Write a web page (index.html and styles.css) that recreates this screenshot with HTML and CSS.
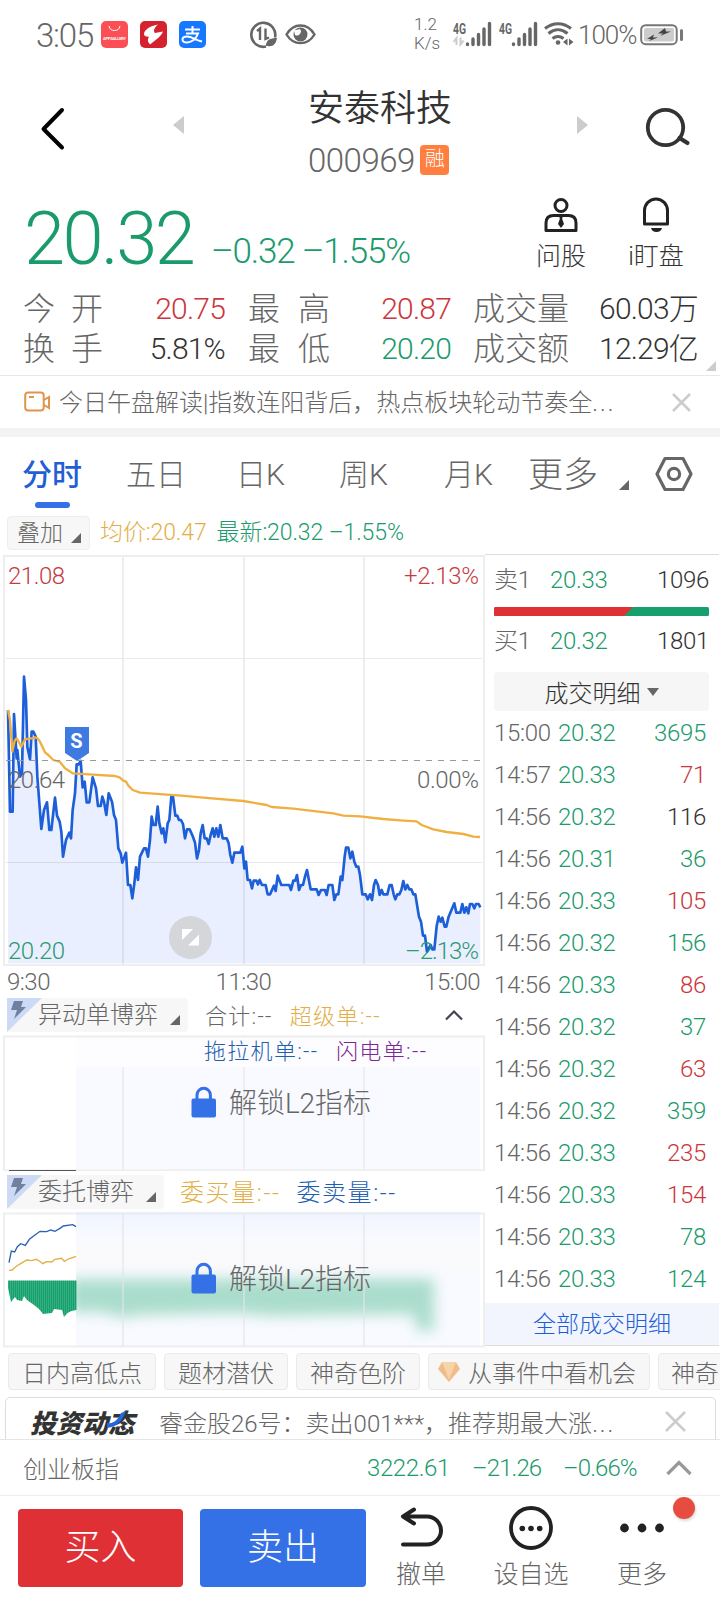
FILE: index.html
```html
<!DOCTYPE html>
<html lang="zh-CN">
<head>
  <meta charset="UTF-8" />
  <title>安泰科技 000969</title>
  <link rel="stylesheet" href="styles.css">
</head>
<body>

  <div class="status">
    <span class="clock">3:05</span>
    <svg class="apps" width="106" height="28" viewBox="0 0 106 28">
      <rect x="0" y="0" width="27" height="27" rx="5" fill="#fb4f55"/>
      <path d="M8 5a5.600 5.600 0 0 0 11 0" fill="none" stroke="#fff" stroke-width="1"/>
      <text x="2" y="18.500" font-size="4" font-weight="700" fill="#fff" textLength="23">APPGALLERY</text>
      <rect x="39" y="0" width="27" height="27" rx="5" fill="#d4232f"/>
      <path d="M57 3.500C49 5 43 9 43 13c0 2.500 3 2.500 5 3-2 3-1 5 1 7.500l5-4c4-3 7-6 8-9l-8 1.500c-2-2-1-5 3-8.500z" fill="#fff"/>
      <rect x="78" y="0" width="27" height="27" rx="5" fill="#1677ff"/>
      <path d="M84 8.500h15M91.500 5v7M85 12.500h12c-2 6-7 9-11 9-6 0-6-6 0-6 5 0 9 4 15 5" fill="none" stroke="#fff" stroke-width="2"/>
    </svg>
    <svg class="modes" width="66" height="28" viewBox="0 0 66 28">
      <path d="M25 16.500a12 12 0 1 0-9 9" fill="none" stroke="#666" stroke-width="2.600"/>
      <path d="M7 10l3-2.500V19M19 16.500L15.500 18V7.500" fill="none" stroke="#666" stroke-width="2.400"/>
      <path d="M16 25c0-6 4-8 11-8-1 6-4 9-9 8z" fill="#666"/>
      <path d="M36.500 13.500c7-12 21-12 28 0-7 11.500-21 11.500-28 0z" fill="none" stroke="#666" stroke-width="2.400"/>
      <circle cx="50.500" cy="13.500" r="7" fill="#666"/>
      <path d="M44 9.500l6-1.500a4 4 0 0 1-5 6z" fill="#fff"/>
    </svg>
    <span class="speed">1.2<br>K/s</span>
    <svg class="signal" width="122" height="28" viewBox="0 0 122 28">
      <g font-size="14" font-weight="700" fill="#666">
        <text x="1" y="12.500" textLength="13" lengthAdjust="spacingAndGlyphs">4G</text>
        <text x="47" y="12.500" textLength="13" lengthAdjust="spacingAndGlyphs">4G</text>
      </g>
      <path d="M1.500 21l3-4v7M8.500 16.500v7l3-4" fill="none" stroke="#ccc" stroke-width="2"/>
      <g stroke="#666" stroke-width="3.400" stroke-linecap="round">
        <path d="M15.500 23v.5M21 18v5.500M26.500 13.500v10M32 8v15.500M37.500 2.500v21"/>
        <path d="M61.500 23v.5M67 18v5.500M72.500 13.500v10M78 8v15.500M83.500 2.500v21"/>
      </g>
      <g fill="none" stroke="#666" stroke-width="3">
        <path d="M93 7.500c8-6.500 18-6.500 26 0M96.500 12.500c6-5 13-5 19 0M100.500 17.500c4-3 7-3 11 0"/>
      </g>
      <circle cx="106" cy="21.500" r="2.300" fill="#666"/>
      <path d="M115.500 17.500v7l-4.500-3.500zM117 17.500v7l4.500-3.500z" fill="#666"/>
    </svg>
    <span class="percent">100%</span>
    <svg class="battery" width="44" height="22" viewBox="0 0 44 22">
      <rect x="1.200" y="1.200" width="35.500" height="19" rx="4.500" fill="none" stroke="#777" stroke-width="2"/>
      <rect x="4" y="4" width="30" height="13.500" rx="2" fill="#ccc"/>
      <path d="M25 4l-7 5.500h5l-3 2.500 11-4.500h-5zM14 10.500l-7 4.500h4l-2 2 9-3.500h-5z" fill="#444"/>
      <path d="M41.500 6.500v9" stroke="#777" stroke-width="3" stroke-linecap="round"/>
    </svg>
  </div>

  <div class="header">
    <svg class="back" width="26" height="44" viewBox="0 0 26 44"><path d="M23 3L4.500 22 23 40.500" fill="none" stroke="#000" stroke-width="4" stroke-linecap="round" stroke-linejoin="round"/></svg>
    <span class="arrow-left"></span>
    <div class="title">
      <h1>安泰科技</h1>
      <div class="code"><span>000969</span><i class="badge">融</i></div>
    </div>
    <span class="arrow-right"></span>
    <svg class="search" width="46" height="44" viewBox="0 0 46 44"><circle cx="20.500" cy="21.500" r="17.700" fill="none" stroke="#333" stroke-width="3.800"/><path d="M34.500 32l8 5" stroke="#333" stroke-width="4.200" stroke-linecap="round"/></svg>
  </div>

  <div class="quote">
    <span class="price down">20.32</span>
    <span class="change down">–0.32 –1.55%</span>
    <div class="tool ask">
      <svg width="34" height="36" viewBox="0 0 34 36"><g fill="none" stroke="#222" stroke-width="3"><circle cx="17" cy="8.500" r="6"/><path d="M2 33.500V26q0-7.500 7.500-7.500h15q7.500 0 7.500 7.500v7.500z" stroke-linejoin="round"/></g><path d="M15 18h4l-.8 4 1.800 5-3 4-3-4 1.800-5z" fill="#222"/></svg>
      <span>问股</span>
    </div>
    <div class="tool watch">
      <svg width="34" height="36" viewBox="0 0 34 36"><path d="M5.500 27V13.500a11.500 11.500 0 0 1 23 0V27z" fill="none" stroke="#222" stroke-width="3" stroke-linejoin="round"/><path d="M12 31h11q-1 4-5.500 4T12 31z" fill="#222"/></svg>
      <span>i盯盘</span>
    </div>
  </div>

  <div class="facts">
    <span class="key wide"><b>今</b><b>开</b></span><span class="value up">20.75</span>
    <span class="key wide"><b>最</b><b>高</b></span><span class="value up">20.87</span>
    <span class="key">成交量</span><span class="value">60.03万</span>
    <span class="key wide"><b>换</b><b>手</b></span><span class="value">5.81%</span>
    <span class="key wide"><b>最</b><b>低</b></span><span class="value down">20.20</span>
    <span class="key">成交额</span><span class="value">12.29亿</span>
    <i class="corner"></i>
  </div>

  <div class="news">
    <svg width="27" height="22" viewBox="0 0 27 22"><g fill="none" stroke="#e0944e" stroke-width="2"><rect x="1.200" y="1.500" width="18.500" height="18" rx="3"/><path d="M20 9l5-3v11l-5-3M5 6h5"/></g></svg>
    <span class="text">今日午盘解读|指数连阳背后，热点板块轮动节奏全<b>...</b></span>
    <svg class="close" width="21" height="21" viewBox="0 0 21 21"><path d="M2 2l17 17M19 2L2 19" stroke="#ccc" stroke-width="2.500"/></svg>
  </div>

  <div class="tabs">
    <span class="tab active">分时</span>
    <span class="tab">五日</span>
    <span class="tab">日K</span>
    <span class="tab">周K</span>
    <span class="tab">月K</span>
    <span class="tab more">更多</span>
    <i class="tri"></i>
    <svg width="38" height="36" viewBox="0 0 38 36"><g fill="none" stroke="#666" stroke-width="3.200" stroke-linejoin="round"><path d="M10 2.500h18L36 18l-8 15.500H10L2 18z"/><circle cx="19" cy="18" r="5.600"/></g></svg>
  </div>

  <div class="main">
    <div class="charts">
      <div class="legend">
        <span class="label">叠加<i class="tri"></i></span>
        <span class="avg">均价:20.47</span>
        <span class="down">最新:20.32 –1.55%</span>
      </div>

      <!-- intraday price -->
      <svg class="chart" width="486" height="411" viewBox="0 555 486 411">
        <g fill="none" stroke="#eee" stroke-width="2">
          <path d="M4 556h480v409H4z"/>
          <path d="M123 556v409M244 556v409M364 556v409" />
          <path d="M6 658.500h476M6 862.500h476" stroke="#e8e8e8" stroke-width="1"/>
        </g>
        <g transform="translate(0 650) scale(.33333)" fill="none" stroke-linejoin="round">
          <path d="M24 940V180L30 485H38L42 192L50 325L52 300L60 380L66 370L72 80L78 150L82 290L90 328L95 245H100L107 260L112 380L124 537L132 480L141 457L148 540H154L165 443L171 497L179 515L184 545L189 620L198 570L208 548L213 565L218 480L225 430L230 343H236L242 333L248 412L254 395L260 457H268L278 382L288 415L294 468H302L307 440L312 455L319 495L326 430L336 455L342 495L348 510L355 595L362 610L367 638L378 608L384 705H391L397 745L403 700L408 652L414 690L420 620L432 595H438L444 620L450 570L455 500L460 525H467L473 470L478 520L485 550L490 535L496 577L503 520L508 510L514 440H519L526 497H532L537 510H543L549 522L555 565L561 538H569L578 558L585 578L591 625L597 600L602 550L608 525L614 565H620L626 582L632 555L638 535L643 560L649 535L655 560L661 525L668 565H680L686 580L691 615L697 638L703 608H721L727 590L733 655L738 635L743 690H750L756 715L761 692H769L774 703L779 690L786 705H797L803 733H810L822 707L827 723L833 677L844 705H868L873 720L880 692H886L891 675L897 720L903 705H909L915 680L921 660L932 718H950L956 735L963 720H975L980 735L986 705H997L1003 750L1009 733H1015L1022 680L1027 690L1034 620L1038 593H1045L1051 625L1057 605L1063 635L1069 650H1075L1080 675L1087 733H1097L1103 748L1110 733L1116 750L1122 705L1127 690L1134 705L1139 735L1145 720L1150 733H1162L1169 705H1175L1181 733L1186 748L1192 733H1198L1204 720L1210 693L1216 718L1222 705L1228 718H1234L1240 733H1246L1252 770L1257 800L1263 815L1269 857H1275L1281 905L1292 885L1297 898H1303L1310 828L1316 800L1322 815L1327 803L1334 830H1339L1346 800L1363 760L1369 788H1381L1387 762L1393 788L1399 772L1405 790L1410 762H1417L1423 775L1428 762H1436L1441 772V940z" fill="#2b62ff" fill-opacity=".1"/>
          <path d="M24 180L30 485H38L42 192L50 325L52 300L60 380L66 370L72 80L78 150L82 290L90 328L95 245H100L107 260L112 380L124 537L132 480L141 457L148 540H154L165 443L171 497L179 515L184 545L189 620L198 570L208 548L213 565L218 480L225 430L230 343H236L242 333L248 412L254 395L260 457H268L278 382L288 415L294 468H302L307 440L312 455L319 495L326 430L336 455L342 495L348 510L355 595L362 610L367 638L378 608L384 705H391L397 745L403 700L408 652L414 690L420 620L432 595H438L444 620L450 570L455 500L460 525H467L473 470L478 520L485 550L490 535L496 577L503 520L508 510L514 440H519L526 497H532L537 510H543L549 522L555 565L561 538H569L578 558L585 578L591 625L597 600L602 550L608 525L614 565H620L626 582L632 555L638 535L643 560L649 535L655 560L661 525L668 565H680L686 580L691 615L697 638L703 608H721L727 590L733 655L738 635L743 690H750L756 715L761 692H769L774 703L779 690L786 705H797L803 733H810L822 707L827 723L833 677L844 705H868L873 720L880 692H886L891 675L897 720L903 705H909L915 680L921 660L932 718H950L956 735L963 720H975L980 735L986 705H997L1003 750L1009 733H1015L1022 680L1027 690L1034 620L1038 593H1045L1051 625L1057 605L1063 635L1069 650H1075L1080 675L1087 733H1097L1103 748L1110 733L1116 750L1122 705L1127 690L1134 705L1139 735L1145 720L1150 733H1162L1169 705H1175L1181 733L1186 748L1192 733H1198L1204 720L1210 693L1216 718L1222 705L1228 718H1234L1240 733H1246L1252 770L1257 800L1263 815L1269 857H1275L1281 905L1292 885L1297 898H1303L1310 828L1316 800L1322 815L1327 803L1334 830H1339L1346 800L1363 760L1369 788H1381L1387 762L1393 788L1399 772L1405 790L1410 762H1417L1423 775L1428 762H1436L1441 772" stroke="#1c5fd8" stroke-width="8"/>
          <path d="M24 180L30 210L37 305L44 272L50 265L56 275L64 290L75 268L90 265H98L105 262L113 265L120 275L135 307L145 315L160 330L180 336L195 355L218 370L280 374L345 378L360 383L370 392L378 395L385 407L398 420L420 428L500 434L545 437L610 443L730 453L800 465L815 471L880 476L1000 490L1030 497L1080 499L1150 507L1200 511L1250 514L1265 525L1300 538L1340 546L1390 552L1420 560L1440 561" stroke="#efb041" stroke-width="7"/>
        </g>
        <path d="M6 760.500h476" stroke="#999" stroke-dasharray="6 6"/>
        <path d="M65 727h24v26l-12 8-12-8z" fill="#3f7ae2"/>
        <text x="76.500" y="748" font-size="20" font-weight="700" fill="#fff" text-anchor="middle">S</text>
        <g font-size="24">
          <text x="8" y="787.500" fill="#666" textLength="57">20.64</text>
          <text x="8" y="583.500" fill="#c73a40" textLength="57">21.08</text>
          <text x="8" y="959" fill="#2d9970" textLength="57">20.20</text>
          <text x="404" y="583.500" fill="#c73a40" textLength="75">+2.13%</text>
          <text x="417" y="787.500" fill="#666" textLength="62">0.00%</text>
          <text x="405" y="959" fill="#2d9970" textLength="74">–2.13%</text>
        </g>
        <circle cx="190.500" cy="937.500" r="21.500" fill="#d4d6da"/>
        <path d="M182 929h11l-11 11zM199 945.500v-11l-11 11z" fill="#fff"/>
      </svg>

      <div class="axis"><span>9:30</span><span>11:30</span><span>15:00</span></div>

      <div class="l2 l2-first">
        <span class="label"><svg width="35" height="34" viewBox="0 0 35 34"><path d="M0 0h35L0 34z" fill="#cddaf6"/><path d="M7 3h9l-2 6h5L7 21l3-9H4z" fill="#70819f"/></svg>异动单博弈<i class="tri"></i></span>
        <span>合计:--</span>
        <span class="avg">超级单:--</span>
        <svg class="up-caret" width="18" height="12" viewBox="0 0 18 12"><path d="M1 10.500l8-8 8 8" fill="none" stroke="#445" stroke-width="2.200"/></svg>
      </div>

      <svg class="chart" width="486" height="136" viewBox="0 1034 486 136">
        <rect x="76" y="1034" width="404" height="136" fill="#f8faff"/>
        <g fill="none" stroke="#eee" stroke-width="2"><path d="M4 1035.500h480v134H4zM123 1035v134M244 1035v134M364 1035v134"/></g>
        <rect x="76" y="1037" width="404" height="29" fill="#fdfdff"/>
        <path d="M9 1169.500h67" stroke="#555"/>
        <g font-size="22"><text x="204" y="1058" fill="#1f5fb0" textLength="113">拖拉机单:--</text><text x="336" y="1058" fill="#7b2596" textLength="90">闪电单:--</text></g>
        <rect x="191.500" y="1097.500" width="24.500" height="19" rx="2" fill="#3470e6"/>
        <path d="M197 1099v-5a6.700 6.700 0 0 1 13.400 0v5" fill="none" stroke="#3470e6" stroke-width="3"/>
        <text x="229" y="1112" font-size="28" fill="#666" textLength="142">解锁L2指标</text>
      </svg>

      <div class="l2 l2-second">
        <span class="label"><svg width="35" height="34" viewBox="0 0 35 34"><path d="M0 0h35L0 34z" fill="#cddaf6"/><path d="M7 3h9l-2 6h5L7 21l3-9H4z" fill="#70819f"/></svg>委托博弈<i class="tri"></i></span>
        <span class="avg">委买量:--</span>
        <span class="sell">委卖量:--</span>
      </div>

      <svg class="chart" width="486" height="136" viewBox="0 1211 486 136">
        <defs>
          <filter id="soft" x="-10%" y="-50%" width="120%" height="200%"><feGaussianBlur stdDeviation="7"/></filter>
          <linearGradient id="haze" x1="0" y1="0" x2="0" y2="1"><stop offset="0" stop-color="#f0f4ff"/><stop offset=".2" stop-color="#f8faff"/><stop offset=".35" stop-color="#faf9fa"/><stop offset=".5" stop-color="#f8faff"/></linearGradient>
          <pattern id="bars" width="2" height="10" patternUnits="userSpaceOnUse"><rect width="2" height="10" fill="#16a06d"/><rect width=".5" height="10" fill="#53bd97"/></pattern>
          <clipPath id="masked"><rect x="76" y="1211" width="404" height="136"/></clipPath>
        </defs>
        <rect x="76" y="1211" width="404" height="135" fill="url(#haze)"/>
        <g clip-path="url(#masked)"><path d="M70 1278h364v52h-16l-5-17-140 2-40-3-95 2-15 3-20-6H70z" fill="#aaddcc" filter="url(#soft)"/></g>
        <g fill="none" stroke="#e2e5ea" stroke-opacity=".6" stroke-width="2"><path d="M4 1212.500h480v133H4zM123 1212v133M244 1212v133M364 1212v133"/></g>
        <g transform="translate(0 1170) scale(.33333)" fill="none" stroke-width="4">
          <path d="M27 275L34 240L44 243L52 227L62 218L76 223L88 205L105 192L120 181L140 182L152 177L165 181L180 172L190 165L218 161L228 167" stroke="#2b62b4"/>
          <path d="M27 298L36 297L50 285L62 278L80 267L95 269L108 265L118 270L128 278L140 272L155 273L165 265L185 262L193 271L205 264L228 256" stroke="#e3ae45"/>
        </g>
        <path d="M8 1279.500h68.500v29.500l-5 1-4 2-3.500 4-2-7-8-1-2 4-9 1-4-5-5-4-7-5-3-4-2 5-5-1-2-3-4 5-3-14z" fill="url(#bars)"/>
        <rect x="191.500" y="1273.500" width="24.500" height="19" rx="2" fill="#3470e6"/>
        <path d="M197 1275v-5a6.700 6.700 0 0 1 13.400 0v5" fill="none" stroke="#3470e6" stroke-width="3"/>
        <text x="229" y="1288" font-size="28" fill="#666" textLength="142">解锁L2指标</text>
      </svg>
    </div>

    <div class="side">
      <div class="level"><span>卖1</span><span class="down">20.33</span><b>1096</b></div>
      <svg class="ratio" width="215" height="9" viewBox="0 0 215 9"><rect width="215" height="9" rx="1.500" fill="#16a06d"/><path d="M1.500 0H139l-9 9H1.500Q0 9 0 7.500v-6Q0 0 1.500 0z" fill="#df3035"/></svg>
      <div class="level"><span>买1</span><span class="down">20.32</span><b>1801</b></div>
      <div class="select">成交明细<i></i></div>
      <div class="trades">
        <div><span>15:00</span><span class="down">20.32</span><b class="down">3695</b></div>
        <div><span>14:57</span><span class="down">20.33</span><b class="up">71</b></div>
        <div><span>14:56</span><span class="down">20.32</span><b>116</b></div>
        <div><span>14:56</span><span class="down">20.31</span><b class="down">36</b></div>
        <div><span>14:56</span><span class="down">20.33</span><b class="up">105</b></div>
        <div><span>14:56</span><span class="down">20.32</span><b class="down">156</b></div>
        <div><span>14:56</span><span class="down">20.33</span><b class="up">86</b></div>
        <div><span>14:56</span><span class="down">20.32</span><b class="down">37</b></div>
        <div><span>14:56</span><span class="down">20.32</span><b class="up">63</b></div>
        <div><span>14:56</span><span class="down">20.32</span><b class="down">359</b></div>
        <div><span>14:56</span><span class="down">20.33</span><b class="up">235</b></div>
        <div><span>14:56</span><span class="down">20.33</span><b class="up">154</b></div>
        <div><span>14:56</span><span class="down">20.33</span><b class="down">78</b></div>
        <div><span>14:56</span><span class="down">20.33</span><b class="down">124</b></div>
      </div>
      <div class="all">全部成交明细</div>
    </div>
  </div>

  <div class="chips">
    <span>日内高低点</span>
    <span>题材潜伏</span>
    <span>神奇色阶</span>
    <span class="gem"><svg width="22" height="20" viewBox="0 0 22 20"><path d="M4 0h14l4 7-11 13L0 7z" fill="#f0bd8a"/><path d="M4 0h14l-3 7H7zM7 7h8l-4 11z" fill="#f7d3a8"/></svg>从事件中看机会</span>
    <span class="last">神奇</span>
  </div>

  <div class="feed">
    <div class="card">
      <span class="logo">投资动态<svg width="20" height="18" viewBox="0 0 20 18"><path d="M0 12C8 13 11 8 14 2l5-2C16 8 11 16 0 17z" fill="#2467e0"/></svg></span>
      <span class="text">睿金股26号：卖出001***，推荐期最大涨<b>...</b></span>
      <svg class="close" width="21" height="21" viewBox="0 0 21 21"><path d="M1 1l19 19M20 1L1 20" stroke="#ccc" stroke-width="2.500"/></svg>
    </div>
  </div>

  <div class="index">
    <span class="name">创业板指</span>
    <span class="down n1">3222.61</span>
    <span class="down n2">–21.26</span>
    <span class="down n3">–0.66%</span>
    <svg width="26" height="16" viewBox="0 0 26 16"><path d="M1.500 14L13 2.500 24.500 14" fill="none" stroke="#999" stroke-width="3.200"/></svg>
  </div>

  <div class="actions">
    <div class="buy-button">买入</div>
    <div class="sell-button">卖出</div>
    <div class="action a1">
      <svg width="44" height="44" viewBox="0 0 44 44"><path d="M15 3.500L4 10.500l11 7M5 10.500h23a14 14 0 0 1 0 28H4" fill="none" stroke="#222" stroke-width="4" stroke-linecap="round" stroke-linejoin="round"/></svg>
      <span>撤单</span>
    </div>
    <div class="action a2">
      <svg width="44" height="44" viewBox="0 0 44 44"><circle cx="22" cy="22" r="20" fill="none" stroke="#222" stroke-width="3.800"/><g fill="#222"><circle cx="13.300" cy="22.500" r="2.800"/><circle cx="22" cy="22.500" r="2.800"/><circle cx="30.700" cy="22.500" r="2.800"/></g></svg>
      <span>设自选</span>
    </div>
    <div class="action a3">
      <svg width="44" height="44" viewBox="0 0 44 44"><g fill="#222"><circle cx="4.500" cy="22" r="4.400"/><circle cx="22" cy="22" r="4.400"/><circle cx="39.500" cy="22" r="4.400"/></g></svg>
      <span>更多</span>
      <i class="dot"></i>
    </div>
  </div>

</body>
</html>
```
FILE: styles.css
```css
* {
  box-sizing: border-box;
}
body {
  margin: 0;
  width: 720px;
  height: 1600px;
  overflow: hidden;
  background: #fff;
  color: #666;
  font-family: Roboto, "Noto Sans CJK SC", sans-serif;
  font-weight: 300;
  font-size: 24px;
  white-space: nowrap;
}
svg {
  display: block;
  flex: none;
}
b, i, h1 {
  font-weight: inherit;
  font-style: normal;
}
.up {
  color: #cc363c !important;
}
.down {
  color: #1b9b6b !important;
}
.avg {
  color: #e3ae45;
}
.tri {
  width: 0;
  height: 0;
  border-left: 10px solid transparent;
  border-bottom: 10px solid #666;
}

/* status bar */
.status {
  display: flex;
  align-items: center;
  height: 70px;
  padding-left: 36px;
}
.clock {
  width: 65px;
  font-size: 33px;
  letter-spacing: -1.2px;
}
.modes {
  margin-left: 43px;
}
.speed {
  width: 38px;
  margin-left: 98px;
  font-size: 17px;
  line-height: 19px;
  margin-top: -2px;
}
.percent {
  width: 62px;
  margin-left: 4px;
  font-size: 26px;
  letter-spacing: -1px;
}

/* header */
.header {
  display: flex;
  height: 115px;
  padding: 17px 0 0 39px;
}
.back {
  margin-top: 20px;
}
.arrow-left, .arrow-right {
  height: 18px;
  margin-top: 29px;
  border: 9px solid transparent;
}
.arrow-left {
  margin-left: 108px;
  border-left: 0;
  border-right: 11px solid #ccc;
}
.arrow-right {
  border-right: 0;
  border-left: 11px solid #ccc;
}
.title {
  width: 264px;
  margin: 0 5px 0 124px;
}
h1 {
  margin: 1px 0 0;
  color: #333;
  font-size: 36px;
  font-weight: 350;
  line-height: 43px;
}
.code {
  display: flex;
  align-items: center;
  font-size: 33px;
  line-height: 36px;
  margin-top: 10px;
  letter-spacing: -.5px;
}
.code span {
  width: 112px;
  padding-top: 2px;
}
.badge {
  width: 29px;
  height: 30px;
  border-radius: 4px;
  background: #ff7f40;
  color: #fff;
  font-size: 20px;
  line-height: 29px;
  text-align: center;
}
.search {
  margin: 19px 0 0 57px;
}

/* price */
.quote {
  display: flex;
  height: 104px;
  padding-left: 24px;
}
.price {
  width: 187px;
  margin-top: 11px;
  font-size: 74px;
  line-height: 86px;
  letter-spacing: -2.5px;
}
.change {
  width: 325px;
  margin-top: 45px;
  font-size: 35px;
  line-height: 43px;
  letter-spacing: -1.2px;
}
.tool {
  display: flex;
  flex-direction: column;
  align-items: center;
  width: 50px;
  padding-top: 12px;
  color: #333;
  font-size: 25px;
  line-height: 34px;
}
.tool span {
  margin-top: 7px;
}
.watch {
  width: 60px;
  margin-left: 40px;
}
.facts {
  display: grid;
  position: relative;
  grid-template-columns: 80px 122px 23px 82px 121px 22px 96px 129px;
  grid-template-rows: 40px 40px;
  height: 87px;
  padding: 0 0 0 23px;
  font-size: 32px;
  line-height: 40px;
  border-bottom: 1px solid #e8e8e8;
}
.facts .key:nth-of-type(6n + 1) { grid-column: 1; }
.facts .value:nth-of-type(6n + 2) { grid-column: 2; }
.facts .key:nth-of-type(6n + 3) { grid-column: 4; }
.facts .value:nth-of-type(6n + 4) { grid-column: 5; }
.facts .key:nth-of-type(6n + 5) { grid-column: 7; }
.facts .value:nth-of-type(6n) { grid-column: 8; }
.wide {
  display: flex;
  justify-content: space-between;
}
.value {
  color: #333;
  font-size: 30px;
  letter-spacing: -.8px;
  text-align: right;
}
.corner {
  position: absolute;
  right: 4px;
  bottom: 4px;
  border-left: 10px solid transparent;
  border-bottom: 10px solid #ccc;
}
.news {
  display: flex;
  align-items: center;
  height: 61px;
  padding: 0 0 0 24px;
  border-bottom: 9px solid #f3f3f3;
}
.text b {
  letter-spacing: 2px;
}
.news .text {
  width: 612px;
  margin: -4px 0 0 8px;
}

/* tabs */
.tabs {
  display: flex;
  align-items: center;
  height: 77px;
  padding: 0 0 4px 22px;
  font-size: 30px;
}
.tab {
  width: 104px;
  margin-top: -4px;
}
.tab.active {
  position: relative;
  color: #1f5fd3;
  font-weight: 500;
}
.tab.active::after {
  content: "";
  position: absolute;
  left: 13px;
  bottom: -14px;
  width: 35px;
  height: 6px;
  border-radius: 3px;
  background: #3470e6;
}
.tab:nth-child(2) { width: 110px; }
.tab:nth-child(3) { width: 103px; }
.tab:nth-child(4) { width: 105px; }
.tab:nth-child(5) { width: 84px; }
.tab.more {
  width: 91px;
  font-size: 35px;
}
.tabs .tri {
  margin: 22px 26px 0 0;
}

/* charts */
.main {
  display: flex;
  height: 833px;
}
.charts {
  width: 486px;
}
.legend {
  display: flex;
  gap: 10px;
  height: 41px;
  padding: 2px 0 5px 7px;
  font-size: 23px;
  line-height: 34px;
  letter-spacing: -.1px;
}
.label {
  display: flex;
  height: 34px;
  padding-left: 9px;
  border: 1px solid #eee;
  border-radius: 4px;
  background: #f7f7f7;
  line-height: 34px;
}
.legend .label {
  width: 83px;
}
.label .tri {
  margin: 16px 0 0 8px;
}
.axis {
  display: flex;
  height: 32px;
  padding: 0 6px 0 7px;
  font-size: 24px;
  line-height: 32px;
  letter-spacing: -.5px;
}
.axis span {
  flex: 1;
  text-align: center;
}
.axis span:first-child {
  text-align: left;
}
.axis span:last-child {
  text-align: right;
}
.l2 {
  display: flex;
  height: 41px;
  padding: 4px 0 0 7px;
  gap: 17px;
  font-size: 22px;
  line-height: 37px;
  letter-spacing: 1.3px;
}
.l2-first {
  height: 37px;
  padding-top: 0;
}
.l2-second {
  font-size: 24px;
  letter-spacing: 1.6px;
  gap: 16px;
}
.l2 .label {
  width: 181px;
  padding: 0 8px 0 0;
  border: 0;
  font-size: 24px;
  letter-spacing: 0;
}
.l2-second .label {
  width: 157px;
}
.l2 .label svg {
  margin-right: -4px;
}
.l2 .label .tri {
  margin: 17px 0 0 12px;
}
.sell {
  color: #1f5fb0;
}
.up-caret {
  margin: 11px 23px 0 auto;
}

/* order side */
.side {
  width: 234px;
  height: 792px;
  margin: 40px 0 0 -1px;
  padding-left: 9px;
  border-top: 1px solid #ddd;
}
.level {
  display: flex;
  height: 48px;
  width: 215px;
  line-height: 50px;
}
.level span {
  width: 56px;
}
.level b, .trades b {
  margin-left: auto;
  color: #333;
}
.level, .trades {
  letter-spacing: -.3px;
}
.ratio {
  margin: 4px 0 0;
}
.select {
  display: flex;
  align-items: center;
  justify-content: center;
  width: 215px;
  height: 39px;
  margin-top: 8px;
  border-radius: 4px;
  background: #f6f6f6;
  color: #333;
}
.select i {
  margin-left: 6px;
  border: 6px solid transparent;
  border-top: 8px solid #666;
  border-bottom: 0;
}
.trades {
  padding-top: 1px;
  height: 592px;
}
.trades div {
  display: flex;
  width: 212px;
  height: 42px;
  line-height: 42px;
}
.trades span {
  width: 64px;
}
.all {
  height: 43px;
  margin-left: -9px;
  background: #f2f5fe;
  border-bottom: 1px solid #ddd;
  color: #1f5fd3;
  font-size: 23px;
  line-height: 44px;
  text-align: center;
}

/* bottom */
.chips {
  display: flex;
  gap: 8px;
  height: 50px;
  padding: 6px 0 7px 8px;
  overflow: hidden;
}
.chips span {
  display: flex;
  flex: none;
  align-items: center;
  justify-content: center;
  width: 124px;
  border: 1px solid #eaeaea;
  border-radius: 4px;
  background: #f7f7f7;
}
.chips span:first-child {
  width: 148px;
}
.chips .gem {
  width: 222px;
  gap: 8px;
  padding-right: 4px;
}
.chips .last {
  justify-content: flex-start;
  padding-left: 12px;
  letter-spacing: -.3px;
}
.feed {
  height: 43px;
  padding: 0 4px 0 5px;
  overflow: hidden;
  border-bottom: 1px solid #e5e5e5;
}
.card {
  display: flex;
  align-items: center;
  height: 48px;
  border: 1px solid #ddd;
  border-radius: 5px;
  padding-left: 24px;
}
.logo {
  position: relative;
  width: 129px;
  color: #333;
  font-size: 26px;
  font-weight: 900;
  font-style: italic;
}
.logo svg {
  position: absolute;
  left: 77px;
  top: 8px;
}
.card .text {
  width: 506px;
}
.index {
  display: flex;
  align-items: center;
  height: 56px;
  padding-left: 23px;
  border-bottom: 1px solid #eee;
  letter-spacing: -.4px;
}
.name {
  width: 344px;
  letter-spacing: 0;
}
.n1 { width: 105px; }
.n2 { width: 91px; }
.n3 { width: 103px; }
.n2, .n3 { letter-spacing: -.9px; }
.actions {
  display: flex;
  height: 104px;
  padding: 13px 0 0 18px;
}
.buy-button, .sell-button {
  width: 165px;
  height: 78px;
  border-radius: 4px;
  background: #df3035;
  color: #fff;
  font-size: 36px;
  line-height: 79px;
  text-align: center;
}
.sell-button {
  width: 166px;
  margin-left: 17px;
  background: #3470e6;
}
.action {
  position: relative;
  display: flex;
  flex-direction: column;
  align-items: center;
  width: 80px;
  height: 80px;
  margin-left: 15px;
  margin-top: -3px;
  font-size: 25px;
}
.action span {
  margin-top: 7px;
  line-height: 36px;
}
.a2 {
  margin-left: 30px;
}
.a3 {
  margin-left: 31px;
}
.dot {
  position: absolute;
  right: -13px;
  top: -9px;
  width: 22px;
  height: 22px;
  border-radius: 11px;
  background: #e64c3f;
  box-shadow: 1px 2px 3px rgba(0, 0, 0, .15);
}
```
